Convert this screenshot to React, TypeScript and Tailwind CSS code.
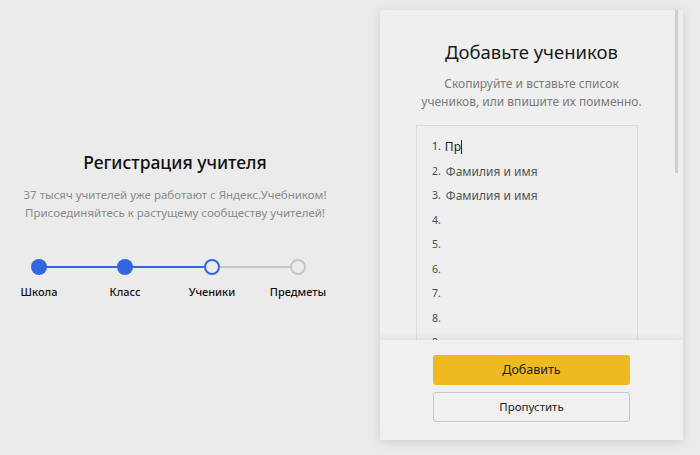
import React from "react";

const steps = [
  { label: "Школа", state: "done" },
  { label: "Класс", state: "done" },
  { label: "Ученики", state: "current" },
  { label: "Предметы", state: "todo" },
];

export default function App() {
  return (
    <div
      className="w-[700px] h-[455px] bg-[#ebebeb] flex overflow-hidden"
      style={{ fontFamily: '"Noto Sans", "Open Sans", sans-serif' }}
    >
      {/* Left */}
      <div className="w-[350px] flex flex-col items-center pt-[148px]">
        <h1 className="text-[17.5px] leading-[28px] font-medium text-[#111]">
          Регистрация учителя
        </h1>
        <p className="mt-[10px] text-[11.5px] leading-[18px] text-[#8a8a8a] text-center">
          37 тысяч учителей уже работают с Яндекс.Учебником!
          <br />
          Присоединяйтесь к растущему сообществу учителей!
        </p>
        <div className="mt-[37px] w-[350px] relative h-[40px]">
          <div className="absolute left-[39px] top-[7px] w-[173px] h-[2px] bg-[#3366dd]" />
          <div className="absolute left-[212px] top-[7px] w-[86px] h-[2px] bg-[#c6c6c6]" />
          {steps.map((s, i) => (
            <div
              key={s.label}
              className={
                "absolute top-0 flex flex-col items-center " +
                (i === 0
                  ? "left-[-1px] w-[80px]"
                  : i === 1
                  ? "left-[85px] w-[80px]"
                  : i === 2
                  ? "left-[172px] w-[80px]"
                  : "left-[258px] w-[80px]")
              }
            >
              <div
                className={
                  "w-[16px] h-[16px] rounded-full box-border relative z-10 " +
                  (s.state === "done"
                    ? "bg-[#3366dd]"
                    : s.state === "current"
                    ? "bg-[#ebebeb] border-[2.5px] border-[#3366dd]"
                    : "bg-[#ebebeb] border-[2.5px] border-[#c6c6c6]")
                }
              />
              <span className="mt-[10px] text-[11px] leading-[14px] font-medium text-[#111]">
                {s.label}
              </span>
            </div>
          ))}
        </div>
      </div>

      {/* Right card */}
      <div className="ml-[30px] mt-[10px] w-[303px] h-[430px] bg-[#efefef] shadow-[0_2px_10px_rgba(0,0,0,0.12)] relative flex flex-col overflow-hidden">
        <div className="absolute right-[5px] top-0 w-[3px] h-[163px] bg-[#cfcfcf]" />
        <div className="flex flex-col items-center pt-[28px]">
          <h2 className="text-[18.5px] leading-[28px] text-[#1a1a1a]">Добавьте учеников</h2>
          <p className="mt-[9px] text-[12px] leading-[18px] text-[#7a7a7a] text-center">
            Скопируйте и вставьте список
            <br />
            учеников, или впишите их поименно.
          </p>
        </div>
        <div className="mt-[14px] ml-[36px] w-[222px] flex-1 min-h-0 overflow-hidden border border-[#dcdcdc] border-b-0 bg-[#eeeeee] pt-[9px] pl-[15px]">
          {[
            "Пр",
            "Фамилия и имя",
            "Фамилия и имя",
            "",
            "",
            "",
            "",
            "",
            "",
          ].map((t, i) => (
            <div key={i} className="h-[24.5px] flex items-center text-[11.5px] text-[#4a4a4a]">
              <span className={i === 0 ? "text-[10.5px] text-[#333]" : "text-[10.5px]"}>{i + 1}.</span>
              {i === 0 ? (
                <span className="ml-[4px] text-[12px] text-[#222] flex items-center">
                  Пр<span className="inline-block w-[1px] h-[14px] bg-[#222]" />
                </span>
              ) : (
                <span className="ml-[5px] text-[12px] text-[#555]">{t}</span>
              )}
            </div>
          ))}
        </div>
        <div className="h-[100px] shrink-0 bg-[#f0f0f0] shadow-[0_-3px_6px_rgba(0,0,0,0.06)] relative z-10 flex flex-col items-center pt-[15px] gap-[7px]">
          <button className="w-[197px] h-[30px] rounded-[3px] bg-[#efb922] text-[12.5px] text-[#222]">
            Добавить
          </button>
          <button className="w-[197px] h-[30px] rounded-[3px] border border-[#c8c8c8] bg-[#f0f0f0] text-[11.5px] text-[#222]">
            Пропустить
          </button>
        </div>
      </div>
    </div>
  );
}
